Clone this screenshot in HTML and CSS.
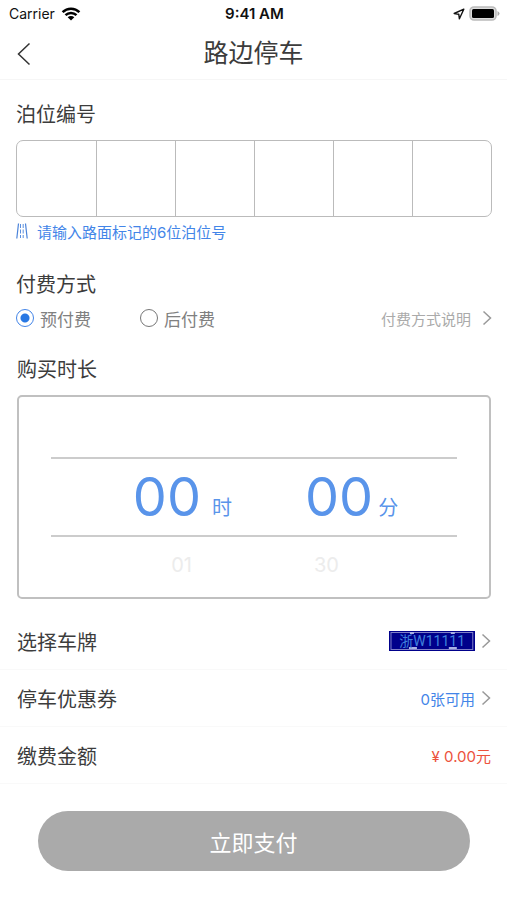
FILE: index.html
```html
<!DOCTYPE html>
<html lang="zh-CN">
<head>
<meta charset="utf-8">
<meta name="viewport" content="width=device-width, initial-scale=1">
<title>路边停车</title>
<link rel="stylesheet" href="styles.css">
</head>
<body>
<div class="status">
  <div class="status-side">
    <span>Carrier</span>
    <svg class="wifi" viewBox="0 0 20 14" aria-hidden="true"><path d="M1.600 5.200a12 12 0 0 1 16.800 0M4.500 8.200a7.800 7.800 0 0 1 11 0" fill="none" stroke="#000" stroke-width="2.500"/><path d="M6.700 10.300a4.700 4.700 0 0 1 6.600 0L10 13.600z" fill="#000"/></svg>
  </div>
  <strong class="clock">9:41 AM</strong>
  <div class="status-side status-end">
    <svg class="locate" viewBox="0 0 12 12" aria-hidden="true"><path d="M10.800 1.200L1.200 5.500l4.600.8.600 4.500z" fill="none" stroke="#111" stroke-width="1.400" stroke-linejoin="round"/></svg>
    <svg class="battery" viewBox="0 0 31 15" aria-hidden="true"><rect x="1" y="1" width="26" height="13" rx="4" fill="#ddd" stroke="#bbb" stroke-width="1.600"/><rect x="3" y="3" width="22" height="9" rx="1.500" fill="#000"/><path d="M28.500 5v5q2-1 2-2.500T28.500 5z" fill="#aaa"/></svg>
  </div>
</div>
<header class="nav">
  <button class="back" type="button" aria-label="返回"><svg viewBox="0 0 14 24" aria-hidden="true"><path d="M12.500 1.500L1.500 12l11 10.500" fill="none" stroke="#333" stroke-width="1.500"/></svg></button>
  <h1>路边停车</h1>
</header>
<main>
  <section class="berth">
    <h2>泊位编号</h2>
    <div class="cells">
      <input type="text" inputmode="numeric" maxlength="1" aria-label="泊位编号第1位">
      <input type="text" inputmode="numeric" maxlength="1" aria-label="泊位编号第2位">
      <input type="text" inputmode="numeric" maxlength="1" aria-label="泊位编号第3位">
      <input type="text" inputmode="numeric" maxlength="1" aria-label="泊位编号第4位">
      <input type="text" inputmode="numeric" maxlength="1" aria-label="泊位编号第5位">
      <input type="text" inputmode="numeric" maxlength="1" aria-label="泊位编号第6位">
    </div>
    <p class="hint">
      <svg viewBox="0 0 12 16" aria-hidden="true"><g fill="none" stroke="#4a83da"><path d="M2.500.5L.8 15.500M9.500.5l1.700 15" stroke-width="1.200"/><path d="M4.500 1v14M7.200 1v14" stroke-width=".9" stroke-dasharray="4 1.500"/></g></svg>
      <span>请输入路面标记的6位泊位号</span>
    </p>
  </section>
  <section class="method">
    <h2>付费方式</h2>
    <div class="options">
      <label><input type="radio" name="method" checked><span>预付费</span></label>
      <label><input type="radio" name="method"><span>后付费</span></label>
      <a class="explain" href="#method-help">付费方式说明<svg class="chevron" viewBox="0 0 10 16" aria-hidden="true"><path d="M1.500 1.500L8.500 8l-7 6.500"/></svg></a>
    </div>
  </section>
  <section class="duration">
    <h2>购买时长</h2>
    <div class="picker">
      <div class="selected">
        <div class="hours"><span class="number">00</span><span class="unit">时</span></div>
        <div class="minutes"><span class="number">00</span><span class="unit">分</span></div>
      </div>
      <div class="next"><span class="next-hour">01</span><span class="next-minute">30</span></div>
    </div>
  </section>
  <a class="row" href="#plate">
    <span class="label">选择车牌</span>
    <span class="plate">
      <svg class="plate-frame" viewBox="0 0 86 20" preserveAspectRatio="none" aria-hidden="true"><rect x="2" y="1.500" width="82" height="17" fill="none" stroke="#8080c8"/><path d="M21 2h4M62 2h4M20 17h8M60 17h8" stroke="#a9b2e4" stroke-width="2"/></svg>
      <span class="plate-text">浙W11111</span>
    </span>
    <svg class="chevron" viewBox="0 0 10 16" aria-hidden="true"><path d="M1.500 1.500L8.500 8l-7 6.500"/></svg>
  </a>
  <a class="row" href="#coupon">
    <span class="label">停车优惠券</span>
    <span class="coupon">0张可用</span>
    <svg class="chevron" viewBox="0 0 10 16" aria-hidden="true"><path d="M1.500 1.500L8.500 8l-7 6.500"/></svg>
  </a>
  <div class="row">
    <span class="label">缴费金额</span>
    <span class="amount">¥ 0.00元</span>
  </div>
  <button class="pay" type="button">立即支付</button>
</main>
</body>
</html>
```
FILE: styles.css
```css
* { box-sizing: border-box; }

body {
  margin: 0;
  background: #fff;
  color: #3c3c3c;
  font-family: Inter, "Noto Sans CJK SC", sans-serif;
}

h1, h2, p { margin: 0; font-weight: 400; }
a { color: inherit; text-decoration: none; }
svg { display: block; flex: none; }
button { border: 0; font: inherit; }

.status {
  display: grid;
  grid-template-columns: 1fr auto 1fr;
  align-items: center;
  height: 27px;
  padding: 0 7px 0 9px;
  color: #111;
  font-size: 14px;
}
.status-side { display: flex; align-items: center; gap: 6px; }
.status-end { justify-content: flex-end; gap: 4px; }
.clock { font-size: 15px; font-weight: 600; }
.wifi { width: 20px; height: 14px; }
.locate { width: 12px; height: 12px; }
.battery { width: 31px; height: 15px; }

.nav {
  display: grid;
  grid-template-columns: 40px 1fr 40px;
  align-items: center;
  height: 53px;
  border-bottom: 1px solid #f6f6f6;
}
.back { padding: 2px 0 0 17px; background: none; }
.back svg { width: 14px; height: 24px; }
h1 { font-size: 25px; line-height: 50px; text-align: center; }

main { padding: 20px 0 28px; }
section { padding: 0 15px 0 16px; }
h2 { font-size: 20px; line-height: 30px; }

.cells {
  display: grid;
  grid-template-columns: repeat(6, 1fr);
  height: 77px;
  margin-top: 10px;
  border: 1px solid #bbb;
  border-radius: 7px;
  overflow: hidden;
}
.cells input {
  min-width: 0;
  border: 0;
  border-left: 1px solid #bbb;
  border-radius: 0;
  background: none;
  font: inherit;
  font-size: 25px;
  text-align: center;
}
.cells input:first-child { border-left: 0; }

.hint {
  display: flex;
  align-items: center;
  gap: 9px;
  height: 28px;
  color: #4385e8;
  font-size: 15px;
}
.hint svg { width: 12px; height: 16px; }

.method { margin-top: 25px; }
.options {
  display: flex;
  align-items: center;
  height: 36px;
  color: #808080;
  font-size: 17px;
}
.options label { display: flex; align-items: center; gap: 6px; margin-right: 49px; }
.options input {
  appearance: none;
  width: 18px;
  height: 18px;
  margin: 0;
  border: 1px solid #777;
  border-radius: 50%;
}
.options input:checked {
  border-color: #4385e8;
  background: radial-gradient(circle, #2878e4 4px, transparent 5px);
}
.explain {
  display: flex;
  align-items: center;
  gap: 11px;
  margin-left: auto;
  color: #aaa;
  font-size: 15px;
}
.chevron { width: 10px; height: 16px; fill: none; stroke: #999; stroke-width: 1.5px; }

.duration { margin-top: 19px; padding: 0 16px 0 17px; }
.picker {
  margin-top: 10px;
  padding: 60px 32px 32px;
  border: 2px solid #c0c0c0;
  border-radius: 5px;
}
.selected {
  display: grid;
  grid-template-columns: 1fr 1fr;
  height: 80px;
  border: solid #ccc;
  border-width: 2px 0;
  color: #5994ea;
}
.hours, .minutes { display: flex; align-items: flex-end; }
.hours { justify-content: flex-end; gap: 11px; padding-right: 22px; }
.minutes { gap: 5px; padding-left: 51px; }
.number { font-size: 54px; line-height: 76px; }
.unit { font-size: 20px; line-height: 54px; }
.next {
  display: grid;
  grid-template-columns: 1fr 1fr;
  padding-top: 13px;
  color: #ececec;
  font-size: 20px;
  line-height: 30px;
  height: 28px;
}
.next-hour { padding-right: 62px; text-align: right; }
.next-minute { padding-left: 60px; }

.duration + .row { margin-top: 14px; }
.row {
  display: flex;
  align-items: center;
  height: 57px;
  padding: 0 16px 0 17px;
  border-bottom: 1px solid #f9f9f9;
  font-size: 15px;
}
.row .chevron { margin-left: 6px; }
.label { margin-right: auto; font-size: 20px; }
.plate {
  position: relative;
  padding: 0 10px;
  background: #00008b;
  color: #3f80dd;
  font: 14px/20px Roboto, "Noto Sans CJK SC", sans-serif;
}
.plate-frame { position: absolute; inset: 0; width: 100%; height: 100%; }
.plate-text { position: relative; }
.coupon { color: #4385e8; }
.amount { color: #ec523c; }

.pay {
  display: block;
  width: calc(100% - 75px);
  height: 60px;
  margin: 27px auto 0;
  border-radius: 30px;
  background: #aaa;
  color: #fff;
  font-size: 22px;
}
```
